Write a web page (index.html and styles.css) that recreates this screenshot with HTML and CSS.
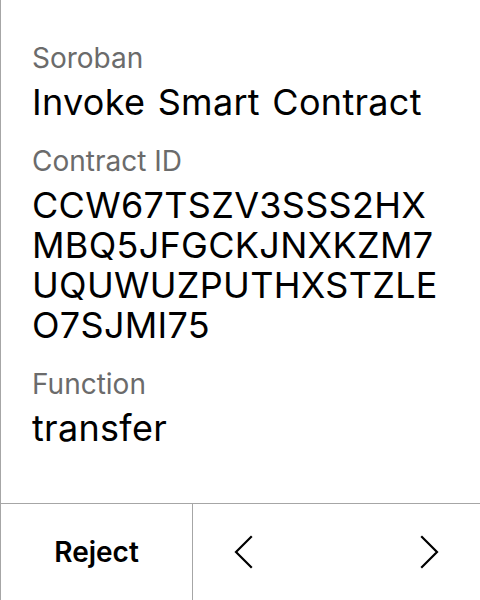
FILE: index.html
```html
<!DOCTYPE html>
<html>
<head>
<meta charset="utf-8">
<link rel="stylesheet" href="styles.css">
</head>
<body>
<div class="screen">
  <div class="content">
    <div class="field">
      <div class="label">Soroban</div>
      <div class="value">Invoke Smart Contract</div>
    </div>
    <div class="field">
      <div class="label">Contract ID</div>
      <div class="value">CCW67TSZV3SSS2HX<br>MBQ5JFGCKJNXKZM7<br>UQUWUZPUTHXSTZLE<br>O7SJMI75</div>
    </div>
    <div class="field">
      <div class="label">Function</div>
      <div class="value">transfer</div>
    </div>
  </div>
  <div class="footer">
    <div class="reject">Reject</div>
    <div class="nav">
      <svg class="chev" width="24" height="40" viewBox="0 0 24 40"><path d="M18 5 L3 20 L18 35" fill="none" stroke="#000" stroke-width="2.2" stroke-linecap="square"/></svg>
      <svg class="chev" width="24" height="40" viewBox="0 0 24 40"><path d="M6 5 L21 20 L6 35" fill="none" stroke="#000" stroke-width="2.2" stroke-linecap="square"/></svg>
    </div>
  </div>
</div>
</body>
</html>
```
FILE: styles.css
```css
html, body {
  margin: 0;
  padding: 0;
  background: #fff;
}
.screen {
  width: 480px;
  height: 600px;
  box-sizing: border-box;
  border-left: 1px solid #a6a6a6;
  display: flex;
  flex-direction: column;
  font-family: Inter, "Noto Sans", sans-serif;
  color: #000;
}
.content {
  flex: 1;
  padding: 40px 16px 0 31px;
  display: flex;
  flex-direction: column;
  gap: 21px;
}
.field {
  display: flex;
  flex-direction: column;
  gap: 6px;
}
.label {
  font-size: 28px;
  line-height: 36px;
  color: #6b6b6b;
}
.value {
  font-size: 36px;
  line-height: 40px;
  letter-spacing: 0.3px;
  word-spacing: 2px;
}
.footer {
  height: 96px;
  border-top: 1px solid #a6a6a6;
  display: flex;
}
.reject {
  width: 191px;
  border-right: 1px solid #a6a6a6;
  display: flex;
  align-items: center;
  justify-content: center;
  font-size: 28px;
  font-weight: 600;
}
.nav {
  flex: 1;
  display: flex;
  align-items: center;
  justify-content: space-between;
  padding: 0 40px 0 40px;
}
.chev {
  display: block;
}
```
